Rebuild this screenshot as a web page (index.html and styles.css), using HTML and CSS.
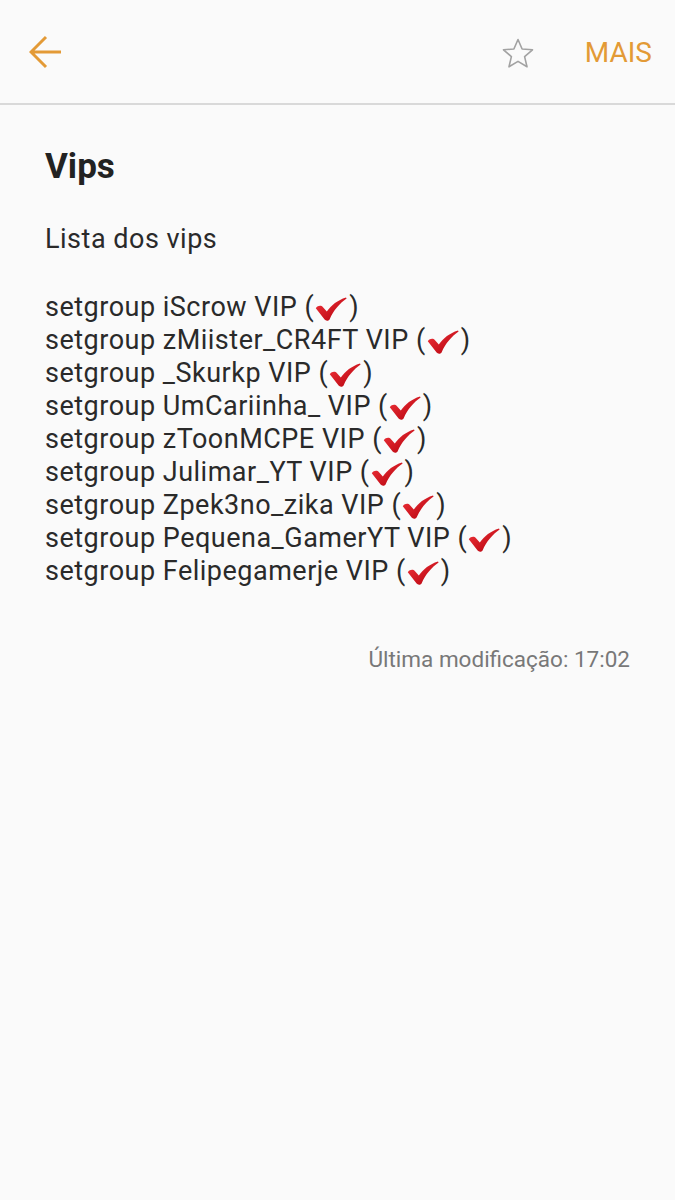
FILE: index.html
```html
<!DOCTYPE html>
<html lang="pt">
<head>
<meta charset="utf-8">
<link rel="stylesheet" href="styles.css">
<title>Vips</title>
</head>
<body>
<svg width="0" height="0" class="defs">
  <defs>
    <linearGradient id="chk" x1="0" y1="0" x2="1" y2="1">
      <stop offset="0" stop-color="#f2343b"/>
      <stop offset="1" stop-color="#b0000b"/>
    </linearGradient>
    <symbol id="check" viewBox="0 0 32 24">
      <path d="M0.8 11.2 C3 8.3 6.2 8.2 8 10.2 L11.8 14.6 C16.5 8 22.5 3 31 0.4 L31.6 1.6 C24.5 6.5 18.5 13.5 14.6 22.4 C13.4 24 10.8 24 9.6 22.6 Z" fill="url(#chk)"/>
    </symbol>
  </defs>
</svg>
<header class="bar">
  <svg class="back" width="34" height="34" viewBox="0 0 34 34"><path d="M32 17 H3 M17 2 L2 17 L17 32" fill="none" stroke="#e39a36" stroke-width="3"/></svg>
  <div class="actions">
    <svg class="star" width="34" height="34" viewBox="0 0 34 34"><path d="M17 2.5 L21.1 12 L31.5 12.8 L23.6 19.6 L26 29.8 L17 24.4 L8 29.8 L10.4 19.6 L2.5 12.8 L12.9 12 Z" fill="none" stroke="#a2a2a2" stroke-width="1.6" stroke-linejoin="round"/></svg>
    <span class="more">MAIS</span>
  </div>
</header>
<main class="note">
  <h1 class="title">Vips</h1>
  <p class="intro">Lista dos vips</p>
  <ul class="list">
    <li>setgroup iScrow VIP (<svg class="ck"><use href="#check"/></svg>)</li>
    <li>setgroup zMiister_CR4FT VIP (<svg class="ck"><use href="#check"/></svg>)</li>
    <li>setgroup _Skurkp VIP (<svg class="ck"><use href="#check"/></svg>)</li>
    <li>setgroup UmCariinha_ VIP (<svg class="ck"><use href="#check"/></svg>)</li>
    <li>setgroup zToonMCPE VIP (<svg class="ck"><use href="#check"/></svg>)</li>
    <li>setgroup Julimar_YT VIP (<svg class="ck"><use href="#check"/></svg>)</li>
    <li>setgroup Zpek3no_zika VIP (<svg class="ck"><use href="#check"/></svg>)</li>
    <li>setgroup Pequena_GamerYT VIP (<svg class="ck"><use href="#check"/></svg>)</li>
    <li>setgroup Felipegamerje VIP (<svg class="ck"><use href="#check"/></svg>)</li>
  </ul>
  <p class="modified">Última modificação: 17:02</p>
</main>
</body>
</html>
```
FILE: styles.css
```css
html, body {
  margin: 0;
  padding: 0;
  background: #fafafa;
}
body {
  font-family: Roboto, "Noto Sans", sans-serif;
  color: #2a2a2a;
  width: 675px;
  min-height: 1200px;
}
.defs {
  position: absolute;
  width: 0;
  height: 0;
}
.bar {
  height: 105px;
  border-bottom: 2px solid #d9d9d9;
  display: flex;
  align-items: center;
  justify-content: space-between;
  padding: 0 23px 0 29px;
  box-sizing: border-box;
}
.back {
  display: block;
  margin-top: 1px;
}
.actions {
  display: flex;
  align-items: center;
  gap: 50px;
}
.star {
  display: block;
  margin-top: 4px;
}
.more {
  color: #e39a36;
  font-size: 28px;
  line-height: 34px;
  margin-top: 2px;
}
.note {
  padding: 0 45px;
}
.title {
  margin: 42px 0 0;
  font-size: 35px;
  font-weight: 700;
  line-height: 40px;
  color: #222;
}
.intro {
  margin: 36px 0 0;
  font-size: 27px;
  letter-spacing: 0.5px;
  line-height: 33px;
}
.list {
  list-style: none;
  margin: 35px 0 0;
  padding: 0;
  font-size: 27px;
  letter-spacing: 0.5px;
  line-height: 33px;
}
.ck {
  width: 32px;
  height: 24px;
  vertical-align: -5px;
  margin: 0 2px 0 1px;
}
.modified {
  margin: 56px 0 0;
  text-align: right;
  font-size: 22.5px;
  line-height: 30px;
  color: #787878;
}
```
